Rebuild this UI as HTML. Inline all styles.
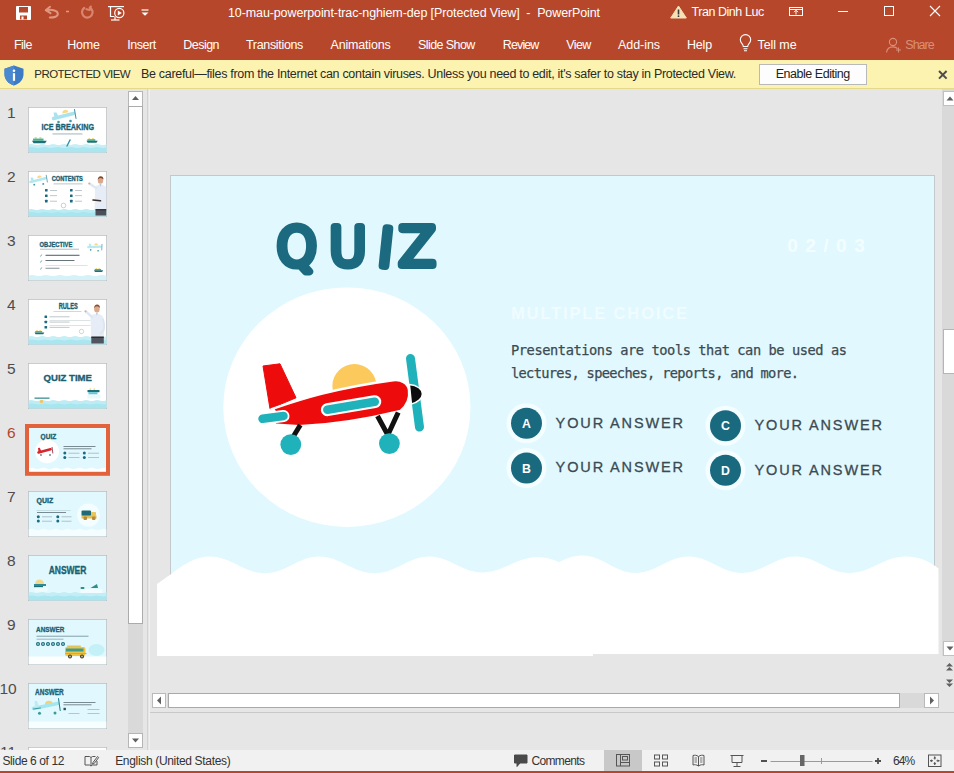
<!DOCTYPE html>
<html lang="en">
<head>
<meta charset="utf-8">
<title>PowerPoint</title>
<style>
*{box-sizing:border-box;margin:0;padding:0}
html,body{width:954px;height:773px;overflow:hidden;background:#e6e6e6}
body{position:relative;font-family:"Liberation Sans",sans-serif;font-size:12px;color:#262626}
.abs{position:absolute}
.t{position:absolute;white-space:nowrap;line-height:1}
#titlebar{left:0;top:0;width:954px;height:60px;background:#b7472a}
#titlebar .t{color:#fff}
.menu{font-size:12.5px;top:39px}
#pv{left:0;top:60px;width:954px;height:29px;background:#fcf3b0;border-bottom:1px solid #e5d98b}
#pv .t{color:#2b2b2b;font-size:12.5px;top:8px}
#enable{left:758.5px;top:4px;width:108.5px;height:21px;background:#fdfdfd;border:1px solid #b9b9b9;text-align:center;line-height:19px;font-size:12.5px;letter-spacing:-0.47px;color:#222}
#left{left:0;top:89px;width:148px;height:661px;background:#e6e6e6}
.num{font-size:15.500px;color:#505050;left:5px}
.th{position:absolute;left:28px;width:79px;height:45px;background:#e2f8fd;border:1px solid #c9c9c9;overflow:hidden}
#main{left:149px;top:89px;width:805px;height:661px;background:#e6e6e6}
#status{left:0;top:750px;width:954px;height:23px;background:#f1f1f1;border-bottom:2px solid #b7472a}
#status .t{font-size:12px;color:#333;top:5px}
.ans{font-family:"Liberation Sans",sans-serif;font-size:14.500px;letter-spacing:1.870px;color:#3c4a52;-webkit-text-stroke:0.300px #3c4a52}
.slidetxt{font-family:"DejaVu Sans Mono","Liberation Mono",monospace}
</style>
</head>
<body>

<!-- ===== title bar + ribbon tabs ===== -->
<div id="titlebar" class="abs">
  <svg class="abs" style="left:0;top:0" width="954" height="60" viewBox="0 0 954 60" fill="none">
    <!-- save -->
    <path d="M16.5 6.5h14v13h-14z" fill="#fff" stroke="#fff" stroke-width="1"/>
    <rect x="19" y="7" width="9" height="5.5" fill="#b7472a"/>
    <rect x="20" y="15.5" width="7" height="4" fill="#b7472a"/>
    <rect x="21.5" y="16.5" width="2" height="3" fill="#fff"/>
    <!-- undo -->
    <g stroke="#e09780" stroke-width="2" stroke-linecap="round" stroke-linejoin="round">
      <path d="M50 6.800l-4.300 3.400 4.800 3"/>
      <path d="M46.500 10.200c4-.800 11-.300 11.300 3.500.2 3-3.500 3.900-8 3.900"/>
    </g>
    <path d="M66 11.500h3" stroke="#e09780" stroke-width="1.600"/>
    <!-- redo -->
    <g stroke="#d98670" stroke-width="2.200" stroke-linecap="round" stroke-linejoin="round">
      <path d="M84.200 8a5.300 5.300 0 1 0 5.600-.400"/>
      <path d="M90.800 6.500l-1 3.500-3.300-.800"/>
    </g>
    <!-- slideshow -->
    <g stroke="#fff" stroke-width="1.2">
      <path d="M108 6.6h16"/>
      <path d="M110.5 7v9.5h4"/>
      <path d="M111 20h8.5"/>
      <path d="M115 17v3"/>
      <circle cx="119.3" cy="13" r="4.6"/>
    </g>
    <path d="M117.8 10.6l4 2.4-4 2.4z" fill="#fff"/>
    <!-- qat caret -->
    <path d="M141.5 10h7" stroke="#fff" stroke-width="1.2"/>
    <path d="M141.5 12.4h7l-3.5 3.4z" fill="#fff"/>
    <!-- warning -->
    <path d="M678.5 6l7.8 12h-15.6z" fill="#f7e2b5" stroke="#f7e2b5" stroke-width="1" stroke-linejoin="round"/>
    <path d="M678.5 9.5v5" stroke="#3a3a3a" stroke-width="1.6"/>
    <circle cx="678.5" cy="16.2" r="0.9" fill="#3a3a3a"/>
    <!-- ribbon display -->
    <g stroke="#fff" stroke-width="1">
      <rect x="789.5" y="7.5" width="13" height="8"/>
      <path d="M789.5 9.5h13"/>
      <path d="M796 14.5v-4M794 12.2l2-2 2 2"/>
    </g>
    <!-- window controls -->
    <path d="M838 11.5h10" stroke="#fff" stroke-width="1"/>
    <rect x="884.5" y="6.5" width="9" height="9" stroke="#fff" stroke-width="1"/>
    <path d="M930 6l10 10M940 6l-10 10" stroke="#fff" stroke-width="1.1"/>
    <!-- bulb -->
    <g stroke="#fff" stroke-width="1.1">
      <path d="M743.3 46.5c0-2.5-3-3.3-3-6.7a5.2 5.2 0 0 1 10.400 0c0 3.400-3 4.200-3 6.700z"/>
      <path d="M743.500 48.700h4M744 50.700h3"/>
    </g>
    <!-- share icon -->
    <g stroke="#d98f7c" stroke-width="1.1">
      <circle cx="893" cy="42" r="3.600"/>
      <path d="M886.500 52.500c.5-4 3-5.600 6.500-5.600 2 0 3.500.6 4.500 1.700"/>
      <path d="M898.500 47.500v5M896 50h5"/>
    </g>
  </svg>
  <div class="t" id="ttl" style="left:228px;top:7px;font-size:12.5px;letter-spacing:-0.11px">10-mau-powerpoint-trac-nghiem-dep [Protected View]&nbsp; - &nbsp;PowerPoint</div>
  <div class="t" id="usr" style="left:691.500px;top:5.600px;font-size:12.5px;letter-spacing:-0.45px">Tran Dinh Luc</div>
  <div class="t menu" style="left:14px;letter-spacing:-0.54px">File</div>
  <div class="t menu" style="left:67.300px;letter-spacing:-0.21px">Home</div>
  <div class="t menu" style="left:127.300px;letter-spacing:-0.46px">Insert</div>
  <div class="t menu" style="left:183.300px;letter-spacing:-0.54px">Design</div>
  <div class="t menu" style="left:246px;letter-spacing:-0.33px">Transitions</div>
  <div class="t menu" style="left:330.500px;letter-spacing:-0.18px">Animations</div>
  <div class="t menu" style="left:418px;letter-spacing:-0.58px">Slide Show</div>
  <div class="t menu" style="left:502.800px;letter-spacing:-0.88px">Review</div>
  <div class="t menu" style="left:566.300px;letter-spacing:-0.62px">View</div>
  <div class="t menu" style="left:618px;letter-spacing:-0.06px">Add-ins</div>
  <div class="t menu" style="left:687px;letter-spacing:-0.18px">Help</div>
  <div class="t menu" style="left:757.500px;letter-spacing:-0.08px">Tell me</div>
  <div class="t menu" style="left:905.300px;color:#d98f7c;letter-spacing:-0.99px">Share</div>
</div>

<!-- ===== protected view bar ===== -->
<div id="pv" class="abs">
  <svg class="abs" style="left:0;top:0" width="954" height="29" viewBox="0 0 954 29" fill="none">
    <path d="M14 5.500l-9.500 3.200v5.500c0 5.500 4 9.500 9.500 11.300 5.500-1.800 9.500-5.800 9.500-11.300v-5.500z" fill="#3d7bc4"/>
    <path d="M14 5.500l-9.500 3.200v5.500c0 5.500 4 9.500 9.500 11.300z" fill="#4a88cf"/>
    <circle cx="14" cy="10.800" r="1.300" fill="#fff"/>
    <rect x="12.900" y="13.200" width="2.200" height="7.600" fill="#fff"/>
    <path d="M939 11l7.600 7.600M946.600 11l-7.600 7.600" stroke="#4d4d4d" stroke-width="2"/>
  </svg>
  <div class="t" style="left:34.300px;font-size:11.500px;top:9px;letter-spacing:-0.55px">PROTECTED VIEW</div>
  <div class="t" id="pvmsg" style="left:141px;letter-spacing:-0.305px">Be careful—files from the Internet can contain viruses. Unless you need to edit, it's safer to stay in Protected View.</div>
  <div class="abs" id="enable">Enable Editing</div>
</div>

<!-- ===== left thumbnails ===== -->
<div id="left" class="abs">
<svg class="abs" style="left:0;top:0" width="148" height="661" viewBox="0 89 148 661">
  <g transform="translate(28 107)"><rect x="0" y="0" width="79" height="46" fill="#b9bdbf"/><g transform="translate(.500 .500)"><svg width="78" height="45" viewBox="0 0 78 45" overflow="hidden"><rect width="78" height="45" fill="#fff"/><path d="M0 37 q2.75 -1.2 5.5 0 q2.75 1.2 5.5 0 q2.75 -1.2 5.5 0 q2.75 1.2 5.5 0 q2.75 -1.2 5.5 0 q2.75 1.2 5.5 0 q2.75 -1.2 5.5 0 q2.75 1.2 5.5 0 q2.75 -1.2 5.5 0 q2.75 1.2 5.5 0 q2.75 -1.2 5.5 0 q2.75 1.2 5.5 0 q2.75 -1.2 5.5 0 q2.75 1.2 5.5 0 q2.75 -1.2 5.5 0 V45 H0z" fill="#c9eff6"/><path d="M0 40 q3.25 -0.8 6.5 0 q3.25 0.8 6.5 0 q3.25 -0.8 6.5 0 q3.25 0.8 6.5 0 q3.25 -0.8 6.5 0 q3.25 0.8 6.5 0 q3.25 -0.8 6.5 0 q3.25 0.8 6.5 0 q3.25 -0.8 6.5 0 q3.25 0.8 6.5 0 q3.25 -0.8 6.5 0 q3.25 0.8 6.5 0 V45 H0z" fill="#a9e6f0"/><g transform="translate(25 5) scale(1.0)"><path d="M0 6l20-5" stroke="#a9e3ee" stroke-width="3.4" stroke-linecap="round"/><path d="M1 5l-1-5 3 0 2 4z" fill="#a9e3ee"/><path d="M21-3l1.500 9" stroke="#3f8fa0" stroke-width="1" stroke-linecap="round"/><path d="M9 1a3 3 0 0 1 6-1.200z" fill="#f6d98a"/><circle cx="5" cy="9.500" r="1.300" fill="#3f9aa6"/><circle cx="17" cy="8.500" r="1.300" fill="#3f9aa6"/></g><text x="13.1" y="22.9" font-family="'Liberation Sans',sans-serif" font-weight="700" font-size="8.52" textLength="52.4" lengthAdjust="spacingAndGlyphs" fill="#1b5f73" stroke="#1b5f73" stroke-width=".35" stroke-linejoin="round">ICE BREAKING</text><rect x="24" y="26" width="30" height=".900" fill="#6b8a94" opacity=".700"/><g transform="translate(3.5 29.5) scale(1.05)"><rect x="2.500" y="0" width="2" height="1.500" fill="#f3d46b"/><rect x="7" y="0" width="2" height="1.500" fill="#f3d46b"/><rect x="1" y="1.500" width="10" height="2" fill="#3fb58e"/><path d="M0 3.500h14l-1.500 2.500h-11z" fill="#1f6f78"/></g><g transform="translate(58 30.5) scale(0.8)"><rect x="2.500" y="0" width="2" height="1.500" fill="#f3d46b"/><rect x="7" y="0" width="2" height="1.500" fill="#f3d46b"/><rect x="1" y="1.500" width="10" height="2" fill="#3fb58e"/><path d="M0 3.500h14l-1.500 2.500h-11z" fill="#1f6f78"/></g><path d="M38.500 38.500l3-6" stroke="#2a93a8" stroke-width="1.400" stroke-linecap="round"/></svg></g></g>
  <g transform="translate(28 171)"><rect x="0" y="0" width="79" height="46" fill="#b9bdbf"/><g transform="translate(.500 .500)"><svg width="78" height="45" viewBox="0 0 78 45" overflow="hidden"><rect width="78" height="45" fill="#fff"/><path d="M0 38 q2.75 -1.2 5.5 0 q2.75 1.2 5.5 0 q2.75 -1.2 5.5 0 q2.75 1.2 5.5 0 q2.75 -1.2 5.5 0 q2.75 1.2 5.5 0 q2.75 -1.2 5.5 0 q2.75 1.2 5.5 0 q2.75 -1.2 5.5 0 q2.75 1.2 5.5 0 q2.75 -1.2 5.5 0 q2.75 1.2 5.5 0 q2.75 -1.2 5.5 0 q2.75 1.2 5.5 0 q2.75 -1.2 5.5 0 V45 H0z" fill="#bdebf3"/><path d="M0 41 q3.25 -0.8 6.5 0 q3.25 0.8 6.5 0 q3.25 -0.8 6.5 0 q3.25 0.8 6.5 0 q3.25 -0.8 6.5 0 q3.25 0.8 6.5 0 q3.25 -0.8 6.5 0 q3.25 0.8 6.5 0 q3.25 -0.8 6.5 0 q3.25 0.8 6.5 0 q3.25 -0.8 6.5 0 q3.25 0.8 6.5 0 V45 H0z" fill="#a5e6ef"/><g transform="translate(2 6) scale(0.75)"><path d="M0 6l20-5" stroke="#b5e7f0" stroke-width="3.4" stroke-linecap="round"/><path d="M1 5l-1-5 3 0 2 4z" fill="#b5e7f0"/><path d="M21-3l1.500 9" stroke="#3f8fa0" stroke-width="1" stroke-linecap="round"/><path d="M9 1a3 3 0 0 1 6-1.200z" fill="#f6d98a"/><circle cx="5" cy="9.500" r="1.300" fill="#3f9aa6"/><circle cx="17" cy="8.500" r="1.300" fill="#3f9aa6"/></g><text x="23.2" y="9.6" font-family="'Liberation Sans',sans-serif" font-weight="700" font-size="6.98" textLength="31.2" lengthAdjust="spacingAndGlyphs" fill="#1b5f73" stroke="#1b5f73" stroke-width=".35" stroke-linejoin="round">CONTENTS</text><rect x="25" y="12" width="29" height=".800" fill="#6b8a94" opacity=".600"/><rect x="16.5" y="17.5" width="2.600" height="2.600" rx=".500" fill="#1c6a7f"/><rect x="21.5" y="18.5" width="7" height=".700" fill="#7d8d94" opacity=".700"/><rect x="41.5" y="17.5" width="2.600" height="2.600" rx=".500" fill="#1c6a7f"/><rect x="46.5" y="18.5" width="7" height=".700" fill="#7d8d94" opacity=".700"/><rect x="16.5" y="22.9" width="2.600" height="2.600" rx=".500" fill="#1c6a7f"/><rect x="21.5" y="23.9" width="7" height=".700" fill="#7d8d94" opacity=".700"/><rect x="41.5" y="22.9" width="2.600" height="2.600" rx=".500" fill="#1c6a7f"/><rect x="46.5" y="23.9" width="7" height=".700" fill="#7d8d94" opacity=".700"/><rect x="16.5" y="28.3" width="2.600" height="2.600" rx=".500" fill="#1c6a7f"/><rect x="21.5" y="29.3" width="7" height=".700" fill="#7d8d94" opacity=".700"/><rect x="41.5" y="28.3" width="2.600" height="2.600" rx=".500" fill="#1c6a7f"/><rect x="46.5" y="29.3" width="7" height=".700" fill="#7d8d94" opacity=".700"/><circle cx="35" cy="34" r="2.300" fill="none" stroke="#9fb4bb" stroke-width=".600"/><g><path d="M66.500 17q0-3.500 5.500-4 5 .500 6 3.500V39h-12z" fill="#e6edf6"/><path d="M67.500 16.500l-6.300-4.300" stroke="#dfe7f2" stroke-width="2.400" stroke-linecap="round"/><circle cx="60.800" cy="12" r="1.100" fill="#dcae92"/><ellipse cx="72" cy="9" rx="2.700" ry="3.300" fill="#dba98c"/><path d="M69.200 8.300q.300-3.600 3-3.600 2.800 0 2.800 3.400-1.500-1.700-3-1.600-1.600 0-2.800 1.800z" fill="#7b4a2e"/><path d="M64.500 28.500l7.500.800" stroke="#3b2f2b" stroke-width="1.600" stroke-linecap="round"/><path d="M71 12.500l1 3 1-3z" fill="#b9c6d8"/><rect x="67" y="38" width="11" height="6" fill="#4b4f5a"/><rect x="67" y="37.600" width="11" height="1.200" fill="#2a2a2e"/></g></svg></g></g>
  <g transform="translate(28 235)"><rect x="0" y="0" width="79" height="46" fill="#b9bdbf"/><g transform="translate(.500 .500)"><svg width="78" height="45" viewBox="0 0 78 45" overflow="hidden"><rect width="78" height="45" fill="#fff"/><path d="M0 40 q3.5 -1 7.0 0 q3.5 1 7.0 0 q3.5 -1 7.0 0 q3.5 1 7.0 0 q3.5 -1 7.0 0 q3.5 1 7.0 0 q3.5 -1 7.0 0 q3.5 1 7.0 0 q3.5 -1 7.0 0 q3.5 1 7.0 0 q3.5 -1 7.0 0 q3.5 1 7.0 0 V45 H0z" fill="#d4f2f7"/><text x="11.1" y="11.0" font-family="'Liberation Sans',sans-serif" font-weight="700" font-size="6.98" textLength="32.7" lengthAdjust="spacingAndGlyphs" fill="#1b5f73" stroke="#1b5f73" stroke-width=".35" stroke-linejoin="round">OBJECTIVE</text><rect x="11.500" y="13.300" width="39" height=".700" fill="#6b8a94" opacity=".800"/><rect x="17" y="19.300" width="34" height=".900" fill="#3a4950"/><rect x="17" y="24.500" width="29" height=".900" fill="#55656c"/><rect x="17" y="32.300" width="14" height=".800" fill="#6a7a80"/><rect x="17" y="29.500" width="42" height=".500" fill="#b9c6ca"/><path d="M12 21l1.200-2M12 27l1.200-2M12 34l1.200-2" stroke="#4d8fa0" stroke-width=".800"/><g transform="translate(61 5) rotate(12)"><g transform="translate(0 3) scale(0.62)"><path d="M0 6l20-5" stroke="#b8e9f1" stroke-width="3.4" stroke-linecap="round"/><path d="M1 5l-1-5 3 0 2 4z" fill="#b8e9f1"/><path d="M21-3l1.500 9" stroke="#3f8fa0" stroke-width="1" stroke-linecap="round"/><path d="M9 1a3 3 0 0 1 6-1.200z" fill="#f6d98a"/><circle cx="5" cy="9.500" r="1.300" fill="#3f9aa6"/><circle cx="17" cy="8.500" r="1.300" fill="#3f9aa6"/></g></g><g transform="translate(65.5 32.5) scale(0.65)"><rect x="2.500" y="0" width="2" height="1.500" fill="#f3d46b"/><rect x="7" y="0" width="2" height="1.500" fill="#f3d46b"/><rect x="1" y="1.500" width="10" height="2" fill="#3fb58e"/><path d="M0 3.500h14l-1.500 2.500h-11z" fill="#1f6f78"/></g></svg></g></g>
  <g transform="translate(28 299)"><rect x="0" y="0" width="79" height="46" fill="#b9bdbf"/><g transform="translate(.500 .500)"><svg width="78" height="45" viewBox="0 0 78 45" overflow="hidden"><rect width="78" height="45" fill="#fff"/><path d="M0 37 q2.75 -1.2 5.5 0 q2.75 1.2 5.5 0 q2.75 -1.2 5.5 0 q2.75 1.2 5.5 0 q2.75 -1.2 5.5 0 q2.75 1.2 5.5 0 q2.75 -1.2 5.5 0 q2.75 1.2 5.5 0 q2.75 -1.2 5.5 0 q2.75 1.2 5.5 0 q2.75 -1.2 5.5 0 q2.75 1.2 5.5 0 q2.75 -1.2 5.5 0 q2.75 1.2 5.5 0 q2.75 -1.2 5.5 0 V45 H0z" fill="#c6eef5"/><path d="M0 40.5 q3.25 -0.8 6.5 0 q3.25 0.8 6.5 0 q3.25 -0.8 6.5 0 q3.25 0.8 6.5 0 q3.25 -0.8 6.5 0 q3.25 0.8 6.5 0 q3.25 -0.8 6.5 0 q3.25 0.8 6.5 0 q3.25 -0.8 6.5 0 q3.25 0.8 6.5 0 q3.25 -0.8 6.5 0 q3.25 0.8 6.5 0 V45 H0z" fill="#a9e6f0"/><text x="30.2" y="9.3" font-family="'Liberation Sans',sans-serif" font-weight="700" font-size="8.38" textLength="19.1" lengthAdjust="spacingAndGlyphs" fill="#1b5f73" stroke="#1b5f73" stroke-width=".35" stroke-linejoin="round">RULES</text><rect x="25" y="11.500" width="28" height=".700" fill="#8aa0a8" opacity=".600"/><rect x="16" y="16.0" width="2.600" height="2.600" rx=".500" fill="#1c6a7f"/><rect x="21" y="17.0" width="20" height=".700" fill="#7d8d94" opacity=".700"/><rect x="16" y="21.2" width="2.600" height="2.600" rx=".500" fill="#1c6a7f"/><rect x="21" y="22.2" width="20" height=".700" fill="#7d8d94" opacity=".700"/><rect x="16" y="26.4" width="2.600" height="2.600" rx=".500" fill="#1c6a7f"/><rect x="21" y="27.4" width="20" height=".700" fill="#7d8d94" opacity=".700"/><rect x="21" y="20.800" width="41" height=".500" fill="#b9c6ca"/><rect x="21" y="25.700" width="41" height=".500" fill="#b9c6ca"/><g transform="translate(6 30.5) scale(0.7)"><rect x="2.500" y="0" width="2" height="1.500" fill="#f3d46b"/><rect x="7" y="0" width="2" height="1.500" fill="#f3d46b"/><rect x="1" y="1.500" width="10" height="2" fill="#3fb58e"/><path d="M0 3.500h14l-1.500 2.500h-11z" fill="#1f6f78"/></g><circle cx="53" cy="32" r="2.200" fill="none" stroke="#a9bcc2" stroke-width=".600"/><g><path d="M62 18.500q0-3.800 6-4.300 6 .500 7 4.300l.500 19h-13z" fill="#e6edf6"/><path d="M63.500 17.500l-6-5.300" stroke="#dfe7f2" stroke-width="2.400" stroke-linecap="round"/><circle cx="57" cy="11.800" r="1.100" fill="#dcae92"/><ellipse cx="68.400" cy="9.400" rx="2.800" ry="3.500" fill="#dba98c"/><path d="M65.500 8.700q.300-3.800 3.100-3.800 2.900 0 2.900 3.600-1.500-1.800-3.100-1.700-1.700 0-2.900 1.900z" fill="#8a4f2c"/><path d="M74.500 20q2 6 .500 11l-3 3" stroke="#dde5f0" stroke-width="2" fill="none" stroke-linecap="round"/><path d="M67.400 13.300l1 3 1-3z" fill="#b9c6d8"/><rect x="62.800" y="37.500" width="12.500" height="6.500" fill="#50545f"/><rect x="62.800" y="37" width="12.500" height="1.300" fill="#26262a"/></g></svg></g></g>
  <g transform="translate(28 363)"><rect x="0" y="0" width="79" height="46" fill="#b9bdbf"/><g transform="translate(.500 .500)"><svg width="78" height="45" viewBox="0 0 78 45" overflow="hidden"><rect width="78" height="45" fill="#fff"/><path d="M0 37 q2.75 -1.2 5.5 0 q2.75 1.2 5.5 0 q2.75 -1.2 5.5 0 q2.75 1.2 5.5 0 q2.75 -1.2 5.5 0 q2.75 1.2 5.5 0 q2.75 -1.2 5.5 0 q2.75 1.2 5.5 0 q2.75 -1.2 5.5 0 q2.75 1.2 5.5 0 q2.75 -1.2 5.5 0 q2.75 1.2 5.5 0 q2.75 -1.2 5.5 0 q2.75 1.2 5.5 0 q2.75 -1.2 5.5 0 V45 H0z" fill="#bfecf4"/><path d="M0 40.5 q3.25 -0.8 6.5 0 q3.25 0.8 6.5 0 q3.25 -0.8 6.5 0 q3.25 0.8 6.5 0 q3.25 -0.8 6.5 0 q3.25 0.8 6.5 0 q3.25 -0.8 6.5 0 q3.25 0.8 6.5 0 q3.25 -0.8 6.5 0 q3.25 0.8 6.5 0 q3.25 -0.8 6.5 0 q3.25 0.8 6.5 0 V45 H0z" fill="#a5e6ef"/><text x="15.1" y="17.9" font-family="'Liberation Sans',sans-serif" font-weight="700" font-size="9.22" textLength="48.3" lengthAdjust="spacingAndGlyphs" fill="#1b5f73" stroke="#1b5f73" stroke-width=".35" stroke-linejoin="round">QUIZ TIME</text><rect x="6" y="34" width="15" height="1.300" fill="#3c8f93"/><circle cx="13" cy="38" r="1.800" fill="#f2c56a"/><g transform="translate(59 25)"><rect x="2" y="0" width="1.600" height="1.300" fill="#f3d46b"/><rect x="6" y="0" width="1.600" height="1.300" fill="#f3d46b"/><rect x="0" y="1.500" width="12" height="2.200" fill="#1f6f78"/><rect x="1" y="3.700" width="9" height="2.300" fill="#5fc7d6"/><rect x="0" y="6" width="13" height="4" fill="#e8f8fb"/></g></svg></g></g>
  <g transform="translate(28 427)"><rect x="0" y="0" width="79" height="46" fill="#b9bdbf"/><g transform="translate(.500 .500)"><svg width="78" height="45" viewBox="0 0 78 45" overflow="hidden"><rect width="78" height="45" fill="#e1f9fe"/><path d="M0 41q3-1.500 6 0t6 0 6 0 6 0 6 0 6 0 6 0 6 0 6 0 6 0 6 0 6 0 6 0V45H0z" fill="#fff"/><text x="12.1" y="11.6" font-family="'Liberation Sans',sans-serif" font-weight="700" font-size="6.98" textLength="15.6" lengthAdjust="spacingAndGlyphs" fill="#1b5f73" stroke="#1b5f73" stroke-width=".35" stroke-linejoin="round">QUIZ</text><ellipse cx="18.500" cy="24" rx="12" ry="11.800" fill="#fff"/><path d="M10 25l12-3.200" stroke="#d8262c" stroke-width="2.600" stroke-linecap="round"/><path d="M10 24.500l-.500-4 1.800-.200 1.500 3.500z" fill="#d8262c"/><path d="M23.500 19.500l.900 6.500" stroke="#8a3a4a" stroke-width=".900"/><circle cx="12.500" cy="27.500" r=".900" fill="#6a7f86"/><circle cx="21.500" cy="27.500" r=".900" fill="#6a7f86"/><rect x="35" y="18.800" width="32" height=".700" fill="#4d5c63"/><rect x="35" y="21" width="28" height=".700" fill="#4d5c63"/><circle cx="36.3" cy="25.6" r="1.500" fill="#1c6a7f"/><rect x="40.0" y="25.3" width="11" height=".700" fill="#7d8d94" opacity=".700"/><circle cx="55.8" cy="25.6" r="1.500" fill="#1c6a7f"/><rect x="59.5" y="25.3" width="11" height=".700" fill="#7d8d94" opacity=".700"/><circle cx="36.3" cy="30.1" r="1.500" fill="#1c6a7f"/><rect x="40.0" y="29.8" width="11" height=".700" fill="#7d8d94" opacity=".700"/><circle cx="55.8" cy="30.1" r="1.500" fill="#1c6a7f"/><rect x="59.5" y="29.8" width="11" height=".700" fill="#7d8d94" opacity=".700"/></svg></g></g>
  <g transform="translate(28 491)"><rect x="0" y="0" width="79" height="46" fill="#b9bdbf"/><g transform="translate(.500 .500)"><svg width="78" height="45" viewBox="0 0 78 45" overflow="hidden"><rect width="78" height="45" fill="#e1f9fe"/><path d="M0 38q3-1.500 6 0t6 0 6 0 6 0 6 0 6 0 6 0 6 0 6 0 6 0 6 0 6 0 6 0V45H0z" fill="#f4fdff"/><text x="8.1" y="11.9" font-family="'Liberation Sans',sans-serif" font-weight="700" font-size="7.40" textLength="16.6" lengthAdjust="spacingAndGlyphs" fill="#1b5f73" stroke="#1b5f73" stroke-width=".35" stroke-linejoin="round">QUIZ</text><ellipse cx="60" cy="23.500" rx="11.500" ry="11.500" fill="#f4fdff"/><rect x="8" y="18.700" width="34" height=".500" fill="#a8c4cb"/><rect x="8.500" y="20.800" width="29" height=".700" fill="#4d5c63"/><circle cx="9.8" cy="25.3" r="1.500" fill="#1c6a7f"/><rect x="13.5" y="25.0" width="10" height=".700" fill="#7d8d94" opacity=".700"/><circle cx="29.3" cy="25.3" r="1.500" fill="#1c6a7f"/><rect x="33.0" y="25.0" width="10" height=".700" fill="#7d8d94" opacity=".700"/><circle cx="9.8" cy="29.6" r="1.500" fill="#1c6a7f"/><rect x="13.5" y="29.3" width="10" height=".700" fill="#7d8d94" opacity=".700"/><circle cx="29.3" cy="29.6" r="1.500" fill="#1c6a7f"/><rect x="33.0" y="29.3" width="10" height=".700" fill="#7d8d94" opacity=".700"/><g transform="translate(53 19)"><rect x="0" y="0" width="9.500" height="5.500" rx="1" fill="#1f6a78"/><rect x="9.500" y="1.500" width="5" height="4" rx=".800" fill="#e9c75a"/><rect x="0" y="5" width="15" height="3" fill="#e2c057"/><rect x="2" y="6" width="3.500" height="3.500" rx="1" fill="#b88a3f"/><rect x="10.500" y="6" width="3.500" height="3.500" rx="1" fill="#b88a3f"/></g></svg></g></g>
  <g transform="translate(28 555)"><rect x="0" y="0" width="79" height="46" fill="#b9bdbf"/><g transform="translate(.500 .500)"><svg width="78" height="45" viewBox="0 0 78 45" overflow="hidden"><rect width="78" height="45" fill="#e1f9fe"/><path d="M0 37 q2.75 -1.2 5.5 0 q2.75 1.2 5.5 0 q2.75 -1.2 5.5 0 q2.75 1.2 5.5 0 q2.75 -1.2 5.5 0 q2.75 1.2 5.5 0 q2.75 -1.2 5.5 0 q2.75 1.2 5.5 0 q2.75 -1.2 5.5 0 q2.75 1.2 5.5 0 q2.75 -1.2 5.5 0 q2.75 1.2 5.5 0 q2.75 -1.2 5.5 0 q2.75 1.2 5.5 0 q2.75 -1.2 5.5 0 V45 H0z" fill="#c3eef5"/><path d="M0 40.5 q3.25 -0.8 6.5 0 q3.25 0.8 6.5 0 q3.25 -0.8 6.5 0 q3.25 0.8 6.5 0 q3.25 -0.8 6.5 0 q3.25 0.8 6.5 0 q3.25 -0.8 6.5 0 q3.25 0.8 6.5 0 q3.25 -0.8 6.5 0 q3.25 0.8 6.5 0 q3.25 -0.8 6.5 0 q3.25 0.8 6.5 0 V45 H0z" fill="#a9e6f0"/><text x="20.2" y="18.2" font-family="'Liberation Sans',sans-serif" font-weight="700" font-size="10.61" textLength="37.7" lengthAdjust="spacingAndGlyphs" fill="#1b5f73" stroke="#1b5f73" stroke-width=".35" stroke-linejoin="round">ANSWER</text><path d="M6.500 28.500a4.500 4.500 0 0 1 9 0z" fill="#f3d88a"/><rect x="5.500" y="28.500" width="12" height="2" fill="#2c8d96"/><rect x="5.500" y="30.500" width="9" height="1.300" fill="#1f6f78"/><rect x="6" y="32" width="13" height="4" fill="#eefbfd"/><path d="M62 32.500l6.500-4 1 4z" fill="#2f8f86"/><rect x="52" y="31.500" width="4" height="2" rx="1" fill="#2f8f86"/><rect x="52" y="33.500" width="22" height="4" rx="1.500" fill="#f2fcfe"/></svg></g></g>
  <g transform="translate(28 619)"><rect x="0" y="0" width="79" height="46" fill="#b9bdbf"/><g transform="translate(.500 .500)"><svg width="78" height="45" viewBox="0 0 78 45" overflow="hidden"><rect width="78" height="45" fill="#e1f9fe"/><rect x="0" y="37" width="78" height="8" fill="#fdffff"/><ellipse cx="68" cy="30.500" rx="8" ry="6" fill="#c4f0f8"/><text x="7.6" y="12.4" font-family="'Liberation Sans',sans-serif" font-weight="700" font-size="8.10" textLength="28.2" lengthAdjust="spacingAndGlyphs" fill="#1b5f73" stroke="#1b5f73" stroke-width=".35" stroke-linejoin="round">ANSWER</text><rect x="8" y="16.300" width="52" height=".700" fill="#5a7a86"/><rect x="8" y="19.300" width="27" height=".600" fill="#6d8892"/><circle cx="9.5" cy="24.500" r="2" fill="#1c6a7f"/><circle cx="9.5" cy="24.500" r=".900" fill="#9fd0d8"/><circle cx="14.5" cy="24.500" r="2" fill="#1c6a7f"/><circle cx="14.5" cy="24.500" r=".900" fill="#9fd0d8"/><circle cx="19.5" cy="24.500" r="2" fill="#1c6a7f"/><circle cx="19.5" cy="24.500" r=".900" fill="#9fd0d8"/><circle cx="24.5" cy="24.500" r="2" fill="#1c6a7f"/><circle cx="24.5" cy="24.500" r=".900" fill="#9fd0d8"/><circle cx="29.5" cy="24.500" r="2" fill="#1c6a7f"/><circle cx="29.5" cy="24.500" r=".900" fill="#9fd0d8"/><circle cx="34.5" cy="24.500" r="2" fill="#1c6a7f"/><circle cx="34.5" cy="24.500" r=".900" fill="#9fd0d8"/><g transform="translate(36.500 26)"><rect x="2" y="0" width="14" height="1.500" rx=".700" fill="#e3c35a"/><rect x="0" y="1.500" width="20.500" height="9" rx="2" fill="#f0c443"/><rect x="1" y="3" width="17.500" height="3" fill="#3a9c90"/><rect x="0" y="7.500" width="21.500" height="1" fill="#d9a93a"/><circle cx="5" cy="11" r="2" fill="#3b3b34"/><circle cx="17" cy="11" r="2" fill="#3b3b34"/><circle cx="5" cy="11" r=".900" fill="#d8c690"/><circle cx="17" cy="11" r=".900" fill="#d8c690"/></g></svg></g></g>
  <g transform="translate(28 683)"><rect x="0" y="0" width="79" height="46" fill="#b9bdbf"/><g transform="translate(.500 .500)"><svg width="78" height="45" viewBox="0 0 78 45" overflow="hidden"><rect width="78" height="45" fill="#e1f9fe"/><rect x="0" y="38" width="78" height="7" fill="#f6feff"/><text x="6.6" y="11.3" font-family="'Liberation Sans',sans-serif" font-weight="700" font-size="8.80" textLength="28.7" lengthAdjust="spacingAndGlyphs" fill="#1b5f73" stroke="#1b5f73" stroke-width=".35" stroke-linejoin="round">ANSWER</text><g transform="translate(5 16)"><path d="M11.500 6a4 4 0 0 1 8-1.500z" fill="#f3d27a"/><path d="M0 9l24-5" stroke="#a4e6ee" stroke-width="3.600" stroke-linecap="round"/><path d="M1.500 8l-.500-6.500 2.500 0 2 5.500z" fill="#bfeaf3"/><path d="M25-1l1.700 12" stroke="#2a7f93" stroke-width="1.100" stroke-linecap="round"/><path d="M0 9.500l7-1" stroke="#3c9aa3" stroke-width="1" stroke-linecap="round"/><circle cx="6" cy="13.800" r="1.500" fill="#3d9a98"/><circle cx="21.500" cy="13.500" r="1.500" fill="#3d9a98"/></g><rect x="35" y="18.800" width="32" height=".700" fill="#4d5c63"/><rect x="35" y="21" width="28" height=".700" fill="#4d5c63"/><rect x="35" y="24.300" width="2.400" height="2.400" fill="#2e4f5c"/><rect x="59" y="25.500" width="12" height=".600" fill="#8fa6ad"/><rect x="40" y="29.700" width="11" height=".600" fill="#8fa6ad"/><rect x="59" y="29.700" width="12" height=".600" fill="#8fa6ad"/></svg></g></g>
  <g transform="translate(28 747)"><rect x="0" y="0" width="79" height="46" fill="#b9bdbf"/><g transform="translate(.500 .500)"><svg width="78" height="45" viewBox="0 0 78 45" overflow="hidden"><rect width="78" height="45" fill="#fff"/></svg></g></g>
  <rect x="27" y="426" width="81" height="47.800" fill="none" stroke="#e2623c" stroke-width="4"/>
</svg>
</div>
  <div class="t num" style="left:7px;top:105px;color:#4d4d4d">1</div>
  <div class="t num" style="left:7px;top:169px;color:#4d4d4d">2</div>
  <div class="t num" style="left:7px;top:233px;color:#4d4d4d">3</div>
  <div class="t num" style="left:7px;top:297px;color:#4d4d4d">4</div>
  <div class="t num" style="left:7px;top:361px;color:#4d4d4d">5</div>
  <div class="t num" style="left:7px;top:425px;color:#b5452c">6</div>
  <div class="t num" style="left:7px;top:489px;color:#4d4d4d">7</div>
  <div class="t num" style="left:7px;top:553px;color:#4d4d4d">8</div>
  <div class="t num" style="left:7px;top:617px;color:#4d4d4d">9</div>
  <div class="t num" style="left:-0.5px;top:681px;color:#4d4d4d">10</div>

<div class="t num" style="left:0px;top:744px;color:#4a4a4a">11</div>
<!-- thumbs scrollbar -->
<div class="abs" style="left:128px;top:91px;width:15px;height:657px;background:#d9d9d9"></div>
<div class="abs" style="left:128px;top:91px;width:15px;height:16px;background:#fff;border:1px solid #b5b5b5"></div>
<div class="abs" style="left:128px;top:106px;width:15px;height:518px;background:#fff;border:1px solid #ababab"></div>
<div class="abs" style="left:128px;top:733px;width:15px;height:15px;background:#fff;border:1px solid #b5b5b5"></div>
<svg class="abs" style="left:128px;top:89px" width="16" height="661" viewBox="128 89 16 661" fill="#606060">
  <path d="M132 100l3.500-4 3.500 4z"/>
  <path d="M132 738.500l3.500 4 3.500-4z"/>
</svg>

<!-- ===== main ===== -->
<div id="main" class="abs"></div>
<div class="abs" style="left:147px;top:89px;width:1px;height:661px;background:#d2d2d2"></div>
<div class="abs" style="left:149px;top:89px;width:1px;height:661px;background:#f0f0f0"></div>

<!-- slide -->
<div id="slide" class="abs" style="left:170px;top:175px;width:765px;height:432px;background:#e1f9fe;border:1px solid #c3c9cb"></div>

<svg class="abs" style="left:0;top:0" width="954" height="773" viewBox="0 0 954 773">
  <!-- white circle -->
  <ellipse cx="346.9" cy="407.2" rx="123.6" ry="119.7" fill="#fff"/>
  <!-- plane -->
  <g id="plane">
    <circle cx="354.400" cy="386" r="22" fill="#fbc95c"/>
        <!-- propeller -->
    <path d="M410.500 358.500l9 68.600" stroke="#20b2ba" stroke-width="9" stroke-linecap="round"/>
    <path d="M409.400 384.500c8 .5 13 5 13 9.500s-5 8.500-11 10z" fill="#0d0d0d" stroke="#fff" stroke-width="1.500"/>
    <!-- tail fin -->
    <path d="M263 366l17-2.200 16 34-26 11z" fill="#ee0b0b" stroke="#ee0b0b" stroke-width="1" stroke-linejoin="round"/>
    <!-- body -->
    <path d="M272.500 408.800C300 399.500 335 388 393 380.300c8-1.100 15 2.700 16 9.700.800 6-.500 14-8.500 21C370 418.500 330 425 299 426.300l-26-1.800c5-4 5-11-.500-15.700z" fill="#ee0b0b" stroke="#fff" stroke-width="2.400"/>
    <!-- gear -->
    <g stroke="#111" stroke-width="5" stroke-linecap="butt" fill="none">
      <path d="M300.300 425l-7 11.500"/>
      <path d="M377.500 416l10.300 19 10.400-22.500"/>
    </g>
    <circle cx="290.800" cy="444.600" r="10.400" fill="#20b2ba"/>
    <circle cx="389.400" cy="443.600" r="10.400" fill="#20b2ba"/>
    <!-- tail plane -->
    <path d="M262.500 418.800l21-2.800" stroke="#fff" stroke-width="12" stroke-linecap="round"/>
    <path d="M262.500 418.800l21-2.800" stroke="#20b2ba" stroke-width="8.500" stroke-linecap="round"/>
    <!-- window -->
    <path d="M327.300 409.700l47.500-8" stroke="#fff" stroke-width="13" stroke-linecap="round"/>
    <path d="M327.300 409.700l47.500-8" stroke="#20b2ba" stroke-width="8.500" stroke-linecap="round"/>
  </g>
  <!-- waves (left piece) -->
  <path id="waveL" d="M157 584 C177.1 570.9 189.9 556.5 210 556.5 C230.9 556.5 244.1 573.3 265 573.3 C285.5 573.3 298.5 556.5 319 556.5 C340.1 556.5 353.4 573.3 374.5 573.3 C395.4 573.3 408.6 556.5 429.5 556.5 C449.4 556.5 462.1 572.5 482 572.5 C503.3 572.5 516.7 557.0 538 557 C559 557 572 573.300 593 573.300 L593 656 L157 656Z" fill="#fff"/>
  <!-- waves (right piece) -->
  <path id="waveR" d="M530 572 C549.8 572.0 562.2 555.5 582 555.5 C602.3 555.5 615.2 573.0 635.5 573 C655.7 573.0 668.4 556.5 688.6 556.5 C708.9 556.5 721.7 573.0 742 573 C762.3 573.0 775.2 556.5 795.5 556.5 C815.8 556.5 828.7 573.0 849 573 C870.5 573.0 884.1 556.5 905.6 556.5 C920 556.5 930 562 938.5 568.5 L938.5 654 L530 654Z" fill="#fff"/>
  <!-- answer circles -->
  <g fill="#f4fdff">
    <circle cx="526.500" cy="423.300" r="20"/>
    <circle cx="526.500" cy="468" r="20"/>
    <circle cx="725.500" cy="425.700" r="20"/>
    <circle cx="725.500" cy="470.300" r="20"/>
  </g>
  <g fill="#1a6a7f">
    <circle cx="526.500" cy="423.300" r="15.500"/>
    <circle cx="526.500" cy="468" r="15.500"/>
    <circle cx="725.500" cy="425.700" r="15.500"/>
    <circle cx="725.500" cy="470.300" r="15.500"/>
  </g>
  <g font-family="'Liberation Sans',sans-serif" font-weight="700" font-size="12.300" fill="#fff" text-anchor="middle">
    <text x="526.400" y="428.300">A</text>
    <text x="526.400" y="472.600">B</text>
    <text x="725.400" y="430.400">C</text>
    <text x="725.400" y="475">D</text>
  </g>
  <!-- title -->
  <text id="quiz" font-family="'DejaVu Sans',sans-serif" font-weight="200" font-size="51.500" fill="#1c6a7f" stroke="#1c6a7f" stroke-width="8.200" stroke-linejoin="round" stroke-linecap="round" y="265"><tspan x="276.500">Q</tspan><tspan x="329">U</tspan><tspan x="376.500" rotate="6">I</tspan><tspan x="399.500">Z</tspan></text>
</svg>

<div class="t" style="left:787.200px;top:236.300px;font-size:19px;font-weight:700;letter-spacing:7.500px;color:#f3fdff">02/03</div>
<div class="t" style="left:511px;top:304.500px;font-size:16.500px;font-weight:700;letter-spacing:1.860px;color:#f0fcff">MULTIPLE CHOICE</div>
<div class="t slidetxt" id="body1" style="left:511px;top:344px;font-size:13.700px;letter-spacing:-0.437px;color:#3c4a52;-webkit-text-stroke:0.250px #3c4a52">Presentations are tools that can be used as</div>
<div class="t slidetxt" id="body2" style="left:511px;top:366.600px;font-size:13.700px;letter-spacing:-0.680px;color:#3c4a52;-webkit-text-stroke:0.250px #3c4a52">lectures, speeches, reports, and more.</div>
<div class="t ans" style="left:555.600px;top:415.600px">YOUR ANSWER</div>
<div class="t ans" style="left:555.600px;top:459.900px">YOUR ANSWER</div>
<div class="t ans" style="left:754.500px;top:417.900px">YOUR ANSWER</div>
<div class="t ans" style="left:754.500px;top:463px">YOUR ANSWER</div>

<!-- right vertical scrollbar -->
<div class="abs" style="left:942px;top:89px;width:12px;height:567px;background:#d9d9d9"></div>
<div class="abs" style="left:943px;top:91px;width:12px;height:15px;background:#fff;border:1px solid #c0c0c0"></div>
<div class="abs" style="left:943px;top:329px;width:12px;height:45px;background:#fff;border:1px solid #b5b5b5"></div>
<div class="abs" style="left:943px;top:641px;width:12px;height:15px;background:#fff;border:1px solid #c0c0c0"></div>
<svg class="abs" style="left:940px;top:89px" width="14" height="620" viewBox="940 89 14 620" fill="#606060">
  <path d="M946.500 100.500l3.500-4 3.500 4z"/>
  <path d="M946.500 646.500l3.500 4 3.500-4z"/>
  <path d="M946 666.500l3.500-3.500 3.500 3.500zM946 670.500l3.500-3.500 3.500 3.500z"/>
  <path d="M946 679.500l3.500 3.500 3.500-3.500zM946 683.500l3.500 3.500 3.500-3.500z"/>
</svg>

<!-- horizontal scrollbar -->
<div class="abs" style="left:167px;top:693px;width:757px;height:15px;background:#d9d9d9"></div>
<div class="abs" style="left:152px;top:693px;width:14px;height:15px;background:#fff;border:1px solid #b9b9b9"></div>
<div class="abs" style="left:168px;top:693px;width:732px;height:15px;background:#fff;border:1px solid #a9a9a9"></div>
<div class="abs" style="left:924px;top:693px;width:15px;height:15px;background:#fff;border:1px solid #b9b9b9"></div>
<svg class="abs" style="left:150px;top:690px" width="800" height="20" viewBox="150 690 800 20" fill="#606060">
  <path d="M161 696.500l-4 4 4 4z"/>
  <path d="M930 696.500l4 4-4 4z"/>
</svg>
<div class="abs" style="left:150px;top:712px;width:804px;height:1px;background:#c8c8c8"></div>

<!-- ===== status bar ===== -->
<div id="status" class="abs">
  <div class="abs" style="left:604px;top:0;width:38px;height:21px;background:#c8c8c8"></div>
  <svg class="abs" style="left:0;top:0" width="954" height="23" viewBox="0 750 954 23" fill="none" stroke="#555" stroke-width="1">
    <!-- notes/spell icon -->
    <path d="M85 756.500h4.500l1.500 1v8.500l-1.500-1h-4.500zM97 761v4h-4.500l-1.500 1" />
    <path d="M91 757.500l1.500-1h3"/>
    <path d="M93 762.500l4.500-6 1.200 1-4.500 6-1.700.600z" fill="#f1f1f1"/>
    <!-- comments bubble -->
    <path d="M514.500 755h12.500v8h-7l-3 3.500v-3.500h-2.500z" fill="#4a4a4a" stroke="#4a4a4a" stroke-linejoin="round"/>
    <!-- normal view -->
    <rect x="616.500" y="754.500" width="13" height="11.500"/>
    <path d="M620.500 754.500v11.500M620.500 762.500h9"/>
    <rect x="622.500" y="756.500" width="5" height="3.500"/>
    <!-- sorter -->
    <rect x="654.500" y="755" width="5" height="4"/><rect x="662.500" y="755" width="5" height="4"/>
    <rect x="654.500" y="762" width="5" height="4"/><rect x="662.500" y="762" width="5" height="4"/>
    <!-- reading view -->
    <path d="M698.500 756.500v9.500M698.500 756.500c-2-1.500-4-1.500-5.500-1v9.500c1.500-.500 3.500-.500 5.500 1c2-1.500 4-1.500 5.500-1v-9.500c-1.500-.500-3.500-.500-5.500 1z"/>
    <path d="M694.500 758h2.500M694.500 760h2.500M694.500 762h2.500M700 758h2.500M700 760h2.500M700 762h2.500" stroke-width=".800"/>
    <!-- slideshow -->
    <path d="M730.500 755.500h13M732 756v6.500h10v-6.500M737 762.500v3.500M733.500 766.500h7"/>
    <!-- zoom -->
    <path d="M761 761h6" stroke-width="2" stroke="#505050"/>
    <path d="M770.500 761.500h102M821.500 758v6" stroke="#9a9a9a"/>
    <rect x="800" y="755" width="4.500" height="11" fill="#666" stroke="none"/>
    <path d="M875 761h6M878 758v6" stroke-width="1.800" stroke="#505050"/>
    <!-- fit -->
    <rect x="928.500" y="755" width="12.500" height="11.500"/>
    <path d="M934.750 756.500v3M934.750 765v-3M930 760.750h3M939.500 760.750h-3" />
    <path d="M933.250 758.500l1.500-2 1.500 2zM933.250 763l1.500 2 1.500-2zM932 759.250l-2 1.500 2 1.500zM937.500 759.250l2 1.500-2 1.500z" fill="#555" stroke="none"/>
  </svg>
  <div class="t" style="left:2.500px;letter-spacing:-0.400px">Slide 6 of 12</div>
  <div class="t" style="left:115.200px;letter-spacing:-0.330px">English (United States)</div>
  <div class="t" style="left:531.400px;letter-spacing:-0.620px">Comments</div>
  <div class="t" style="left:893.100px;letter-spacing:-1px">64%</div>
</div>

</body>
</html>
